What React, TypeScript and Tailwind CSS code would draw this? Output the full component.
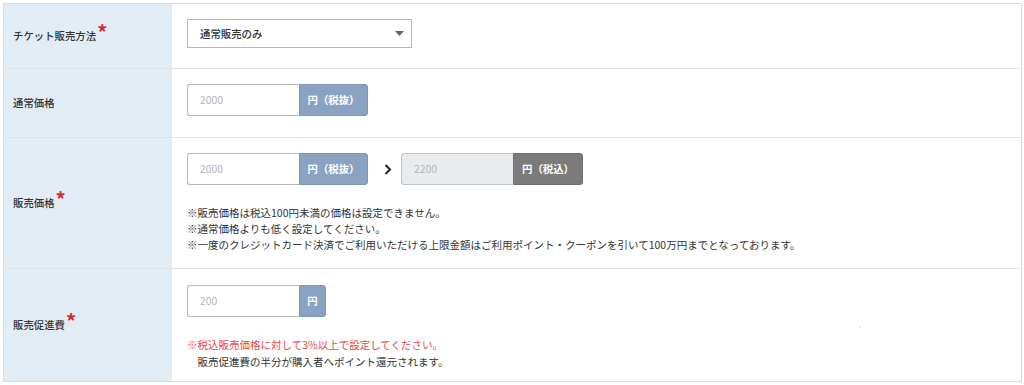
import React from 'react';

const font = { fontFamily: '"Noto Sans CJK JP", "Noto Sans", sans-serif' };

const Label = ({ text, required }: { text: string; required?: boolean }) => (
  <div className="w-[168px] shrink-0 bg-[#e2ecf5] flex items-center pl-[9px]">
    <span className="text-[10.4px] font-medium text-[#333]">{text}</span>
    {required && (
      <span className="text-[#d9252a] text-[20px] font-bold leading-none relative -top-[4px] ml-[1px]">*</span>
    )}
  </div>
);

const PriceInput = ({
  value,
  unit,
  unitWidth = 'w-[69px]',
  disabled,
}: {
  value: string;
  unit: string;
  unitWidth?: string;
  disabled?: boolean;
}) => (
  <div className="flex h-[32px]">
    <div
      className={`w-[112px] border border-r-0 rounded-l-[3px] flex items-center pl-[12px] text-[10.4px] text-[#b5b5b5] ${
        disabled ? 'bg-[#e9ecef] border-[#c4c4c4]' : 'bg-white border-[#b8b8b8]'
      }`}
    >
      {value}
    </div>
    <div
      className={`${unitWidth} rounded-r-[3px] flex items-center justify-center text-[10.4px] font-bold text-white ${
        disabled ? 'bg-[#7b7b7b] border border-[#6e6e6e]' : 'bg-[#8aa3c2] border border-[#7d96b6]'
      }`}
    >
      {unit}
    </div>
  </div>
);

export default function App() {
  return (
    <div className="bg-white w-[1024px] h-[385px] pt-[3px] pl-[3px]" style={font}>
      <div className="w-[1019px] border border-[#dcdcdc]">
        {/* チケット販売方法 */}
        <div className="flex h-[65px] border-b border-[#e2e2e2]">
          <Label text="チケット販売方法" required />
          <div className="flex-1 pl-[15px] pt-[15px]">
            <div className="w-[225px] h-[29px] border border-[#b8b8b8] flex items-center justify-between pl-[12px] pr-[7px]">
              <span className="text-[10.4px] font-medium text-[#333]">通常販売のみ</span>
              <svg width="9" height="5" viewBox="0 0 9 5">
                <path d="M0 0 L9 0 L4.5 5 Z" fill="#666" />
              </svg>
            </div>
          </div>
        </div>

        {/* 通常価格 */}
        <div className="flex h-[69px] border-b border-[#e2e2e2]">
          <Label text="通常価格" />
          <div className="flex-1 pl-[15px] pt-[15px]">
            <div className="h-[33px] flex">
              <PriceInput value="2000" unit="円（税抜）" />
            </div>
          </div>
        </div>

        {/* 販売価格 */}
        <div className="flex h-[131px] border-b border-[#e2e2e2]">
          <Label text="販売価格" required />
          <div className="flex-1 pl-[15px] pt-[15px]">
            <div className="flex items-center">
              <PriceInput value="2000" unit="円（税抜）" />
              <svg width="8" height="11" viewBox="0 0 8 11" className="ml-[16px] mr-[9px]">
                <path d="M1.5 1 L6 5.5 L1.5 10" stroke="#222" strokeWidth="2" fill="none" />
              </svg>
              <PriceInput value="2200" unit="円（税込）" unitWidth="w-[70px]" disabled />
            </div>
            <div className="mt-[20px] text-[10.5px] leading-[16px] text-[#333]">
              <p>※販売価格は税込100円未満の価格は設定できません。</p>
              <p>※通常価格よりも低く設定してください。</p>
              <p>※一度のクレジットカード決済でご利用いただける上限金額はご利用ポイント・クーポンを引いて100万円までとなっております。</p>
            </div>
          </div>
        </div>

        {/* 販売促進費 */}
        <div className="flex h-[112px]">
          <Label text="販売促進費" required />
          <div className="flex-1 pl-[15px] pt-[16px] relative">
            <div className="flex">
              <PriceInput value="200" unit="円" unitWidth="w-[27px]" />
            </div>
            <div className="mt-[19px] text-[10.5px] leading-[17px]">
              <p className="text-[#e8474a]">※税込販売価格に対して3%以上で設定してください。</p>
              <p className="text-[#333]">　販売促進費の半分が購入者へポイント還元されます。</p>
            </div>
            <span className="absolute left-[687px] top-[58px] w-[1px] h-[1px] bg-[#bbb]" />
          </div>
        </div>
      </div>
    </div>
  );
}
